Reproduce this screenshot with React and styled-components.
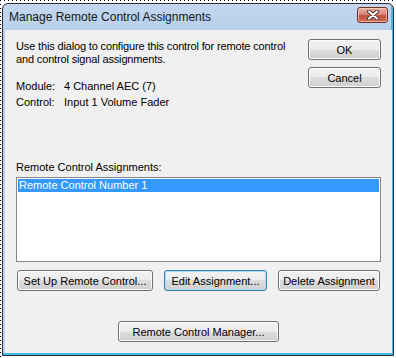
import styled, { createGlobalStyle } from "styled-components";

const GlobalStyle = createGlobalStyle`
  html, body {
    margin: 0;
    padding: 0;
    background: #ffffff;
  }
  body {
    font-family: "Liberation Sans", Arial, sans-serif;
    font-size: 11px;
    color: #000;
  }
`;

const Screen = styled.div`
  width: 396px;
  height: 358px;
  overflow: hidden;
  background:
    repeating-linear-gradient(90deg, #000 0 1px, transparent 1px 4px) top left / 100% 1px no-repeat,
    repeating-linear-gradient(180deg, #000 0 1px, transparent 1px 4px) top left / 1px 100% no-repeat;
  padding: 3px 0 0 2px;
  box-sizing: border-box;
`;

const Window = styled.div`
  width: 392px;
  height: 353px;
  box-sizing: border-box;
  border: 1px solid #2a2d33;
  border-radius: 6px 6px 0 0;
  background: linear-gradient(#c3d7ef, #b7cfeb 30px, #c0d6ee);
  box-shadow: inset -2px -2px 0 #45b8ea;
  display: flex;
  flex-direction: column;
`;

const TitleBar = styled.div`
  height: 26px;
  flex: none;
  display: flex;
  align-items: flex-start;
  justify-content: space-between;
  padding: 0 5px 0 6px;
`;

const Title = styled.span`
  font-size: 12px;
  line-height: 26px;
  color: #111820;
`;

const CloseButton = styled.div`
  margin-top: 3px;
  width: 31px;
  height: 16px;
  box-sizing: border-box;
  border: 1px solid #7a2e26;
  border-radius: 3px;
  background: linear-gradient(#eab0a3, #d8887a 45%, #c2503e 55%, #d06c59);
  box-shadow: inset 0 0 0 1px rgba(255, 220, 210, 0.6);
  display: flex;
  align-items: center;
  justify-content: center;
`;

const Frame = styled.div`
  flex: 1;
  padding: 0 3px 2px 2px;
  display: flex;
`;

const Panel = styled.div`
  flex: 1;
  background: #f0f0f0;
  padding: 9px 11px 11px 11px;
  display: flex;
  flex-direction: column;
`;

const TopRow = styled.div`
  display: flex;
  justify-content: space-between;
  align-items: flex-start;
`;

const Info = styled.div`
  margin-top: 1px;
`;

const Description = styled.p`
  margin: 0;
  line-height: 13px;
  letter-spacing: -0.15px;
`;

const Details = styled.div`
  margin-top: 12px;
  display: grid;
  grid-template-columns: 48px auto;
  line-height: 16px;
`;

const ButtonColumn = styled.div`
  display: flex;
  flex-direction: column;
  gap: 7px;
`;

const Button = styled.button`
  font-family: "Liberation Sans", Arial, sans-serif;
  font-size: 11px;
  color: #000;
  width: ${({ w }) => w}px;
  height: 21px;
  padding: 0;
  box-sizing: border-box;
  border: 1px solid ${({ primary }) => (primary ? "#3c7fb1" : "#707070")};
  border-radius: 3px;
  background: linear-gradient(#f2f2f2 0%, #ebebeb 50%, #dddddd 50%, #cfcfcf 100%);
  box-shadow: inset 0 0 0 1px ${({ primary }) => (primary ? "#a9dcf6" : "#fcfcfc")};
  display: flex;
  align-items: center;
  justify-content: center;
  flex: none;
`;

const ListLabel = styled.div`
  margin-top: 51px;
  line-height: 13px;
`;

const ListBox = styled.div`
  margin-top: 3px;
  width: 365px;
  height: 85px;
  box-sizing: border-box;
  border: 1px solid #828790;
  background: #fff;
  padding: 1px;
`;

const ListItem = styled.div`
  height: 13px;
  line-height: 13px;
  padding-left: 1px;
  background: ${({ selected }) => (selected ? "#3399ff" : "transparent")};
  color: ${({ selected }) => (selected ? "#fff" : "#000")};
`;

const ActionRow = styled.div`
  margin-top: 8px;
  padding-left: 1px;
  display: flex;
  gap: 11px;
`;

const FooterRow = styled.div`
  margin-top: 30px;
  display: flex;
  justify-content: center;
`;

function CloseGlyph() {
  return (
    <svg width="14" height="10" viewBox="0 0 14 10">
      <path d="M3 1.5 L11 8.5 M11 1.5 L3 8.5" stroke="#5a3a36" strokeWidth="4" strokeLinecap="round" />
      <path d="M3 1.5 L11 8.5 M11 1.5 L3 8.5" stroke="#ffffff" strokeWidth="2" strokeLinecap="round" />
    </svg>
  );
}

export default function App() {
  return (
    <Screen>
      <GlobalStyle />
      <Window>
        <TitleBar>
          <Title>Manage Remote Control Assignments</Title>
          <CloseButton>
            <CloseGlyph />
          </CloseButton>
        </TitleBar>
        <Frame>
          <Panel>
            <TopRow>
              <Info>
                <Description>
                  Use this dialog to configure this control for remote control
                  <br />
                  and control signal assignments.
                </Description>
                <Details>
                  <span>Module:</span>
                  <span>4 Channel AEC (7)</span>
                  <span>Control:</span>
                  <span>Input 1 Volume Fader</span>
                </Details>
              </Info>
              <ButtonColumn>
                <Button w={73}>OK</Button>
                <Button w={73}>Cancel</Button>
              </ButtonColumn>
            </TopRow>
            <ListLabel>Remote Control Assignments:</ListLabel>
            <ListBox>
              <ListItem selected>Remote Control Number 1</ListItem>
            </ListBox>
            <ActionRow>
              <Button w={136}>Set Up Remote Control...</Button>
              <Button w={103} primary>
                Edit Assignment...
              </Button>
              <Button w={102}>Delete Assignment</Button>
            </ActionRow>
            <FooterRow>
              <Button w={161}>Remote Control Manager...</Button>
            </FooterRow>
          </Panel>
        </Frame>
      </Window>
    </Screen>
  );
}
